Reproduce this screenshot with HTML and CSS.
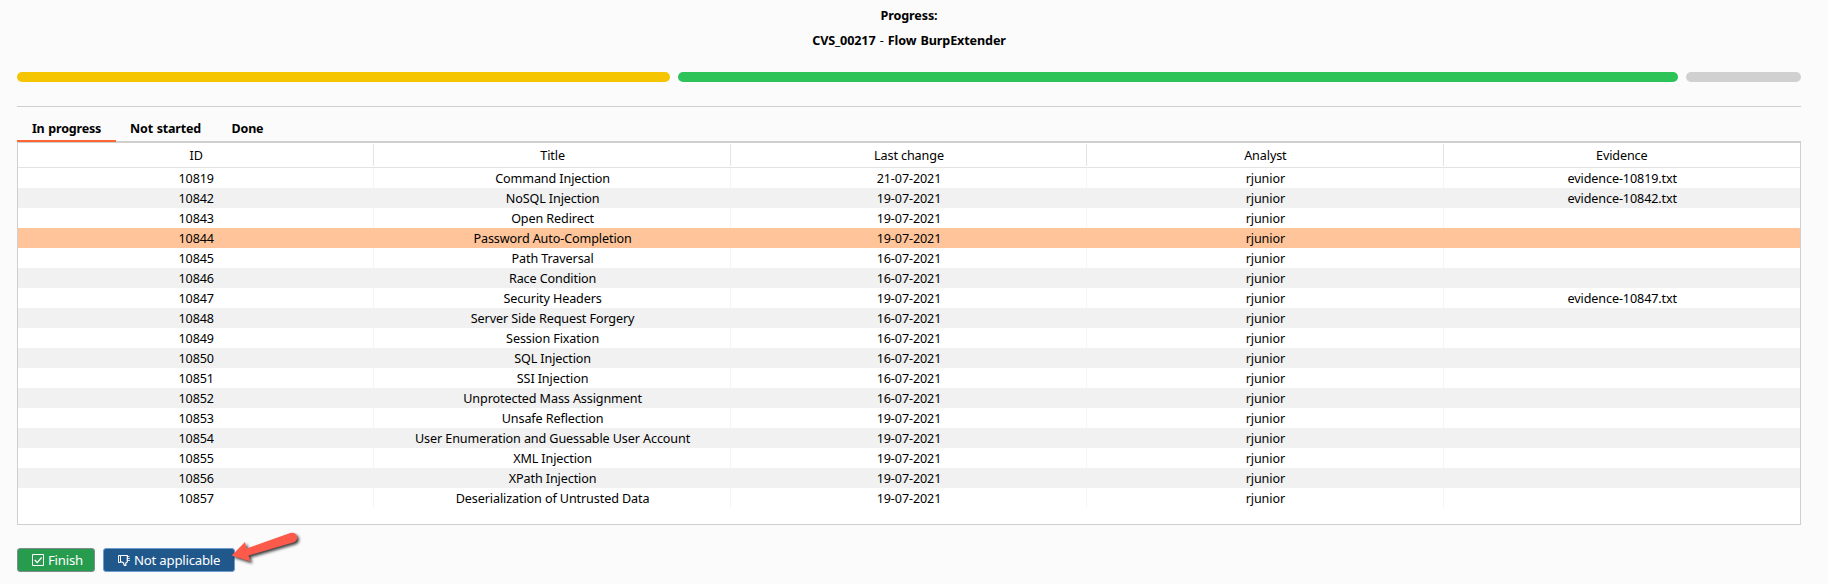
FILE: index.html
```
<!DOCTYPE html>
<html lang="en">
<head>
<meta charset="utf-8">
<title>Progress</title>
<link rel="stylesheet" href="styles.css">
</head>
<body>
<header class="heading"><div class="label">Progress:</div><div class="flow">CVS_00217 <span class="dash">-</span> Flow BurpExtender</div></header>
<div class="progress"><div class="bar doing"></div><div class="bar done"></div><div class="bar rest"></div></div>
<nav class="tabs"><span class="tab active">In progress</span><span class="tab">Not started</span><span class="tab last">Done</span></nav>
<main class="panel">
<table class="grid">
<thead><tr><th>ID</th><th>Title</th><th>Last change</th><th>Analyst</th><th>Evidence</th></tr></thead>
<tbody>
<tr><td>10819</td><td>Command Injection</td><td>21-07-2021</td><td>rjunior</td><td>evidence-10819.txt</td></tr>
<tr><td>10842</td><td>NoSQL Injection</td><td>19-07-2021</td><td>rjunior</td><td>evidence-10842.txt</td></tr>
<tr><td>10843</td><td>Open Redirect</td><td>19-07-2021</td><td>rjunior</td><td></td></tr>
<tr class="selected"><td>10844</td><td>Password Auto-Completion</td><td>19-07-2021</td><td>rjunior</td><td></td></tr>
<tr><td>10845</td><td>Path Traversal</td><td>16-07-2021</td><td>rjunior</td><td></td></tr>
<tr><td>10846</td><td>Race Condition</td><td>16-07-2021</td><td>rjunior</td><td></td></tr>
<tr><td>10847</td><td>Security Headers</td><td>19-07-2021</td><td>rjunior</td><td>evidence-10847.txt</td></tr>
<tr><td>10848</td><td>Server Side Request Forgery</td><td>16-07-2021</td><td>rjunior</td><td></td></tr>
<tr><td>10849</td><td>Session Fixation</td><td>16-07-2021</td><td>rjunior</td><td></td></tr>
<tr><td>10850</td><td>SQL Injection</td><td>16-07-2021</td><td>rjunior</td><td></td></tr>
<tr><td>10851</td><td>SSI Injection</td><td>16-07-2021</td><td>rjunior</td><td></td></tr>
<tr><td>10852</td><td>Unprotected Mass Assignment</td><td>16-07-2021</td><td>rjunior</td><td></td></tr>
<tr><td>10853</td><td>Unsafe Reflection</td><td>19-07-2021</td><td>rjunior</td><td></td></tr>
<tr><td>10854</td><td>User Enumeration and Guessable User Account</td><td>19-07-2021</td><td>rjunior</td><td></td></tr>
<tr><td>10855</td><td>XML Injection</td><td>19-07-2021</td><td>rjunior</td><td></td></tr>
<tr><td>10856</td><td>XPath Injection</td><td>19-07-2021</td><td>rjunior</td><td></td></tr>
<tr><td>10857</td><td>Deserialization of Untrusted Data</td><td>19-07-2021</td><td>rjunior</td><td></td></tr>
</tbody>
</table>
</main>
<footer class="actions">
<button class="btn finish"><svg width="13" height="13" viewBox="0 0 13 13" fill="none" stroke="#fff"><path d="M.5 .5h11v11H.5z"/><path d="M2.8 6l2.4 2.6L9.6 3.5" stroke-width="1.3"/></svg><span>Finish</span></button>
<button class="btn na"><svg width="13" height="13" viewBox="0 0 13 13" fill="none" stroke="#fff"><path d="M.5 1.5h2v7h-2z"/><path d="M2.5 1.5h6.8v6.5L7.8 9v2.5H6.4L5.3 8.8 2.5 7.5" stroke-width="1.2"/><path d="M9 2.5h2.5M9 4.5h3M9 6.5h3" stroke-opacity=".8"/></svg><span>Not applicable</span></button>
</footer>
<svg class="arrow" width="80" height="50" viewBox="225 525 80 50"><path d="M231.5 555.5L245 542l1.6 6.6 43.6-15.6a5 5 0 0 1 3.7 9.3L248.5 555.4l2 6.2z" fill="#fd5a4b"/></svg>
</body>
</html>
```
FILE: styles.css
```
* { box-sizing: border-box; }
body { margin: 0; height: 584px; padding: 0 27px 0 17px; background: #fbfbfb; color: #000; font: 12.6px/20px "Noto Sans", sans-serif; letter-spacing: -.11px; overflow: hidden; position: relative; }
.heading { height: 72px; padding: 6px 0 0; text-align: center; font-weight: 700; font-size: 12.6px; letter-spacing: -.12px; word-spacing: 1px; }
.label { height: 22px; line-height: 20px; }
.flow { line-height: 26px; }
.dash { font-weight: 400; }
.progress { display: grid; grid-template-columns: 653px 1000px 115px; gap: 8px; height: 35px; border-bottom: 1px solid #cfcfcf; }
.bar { height: 10px; border-radius: 5px; }
.doing { background: #f4c500; }
.done { background: #2dc358; }
.rest { background: #d0d0d0; }
.tabs { display: flex; height: 35px; margin-bottom: -1px; padding-top: 11px; font-weight: 700; font-size: 12.5px; letter-spacing: -.2px; word-spacing: .8px; position: relative; }
.tab { width: 99px; height: 24px; padding-top: 1px; text-align: center; white-space: nowrap; }
.tab.last { width: 65px; }
.active { border-bottom: 2px solid #ff6633; }
.panel { height: 384px; border: 1px solid #cfcfcf; border-top-width: 2px; background: #fff; }
.grid { width: 1782px; table-layout: fixed; border-collapse: separate; border-spacing: 0; text-align: center; }
.grid th { height: 25px; padding: 1px 0 0; font-weight: 400; border-bottom: 1px solid #e3e3e3; background: linear-gradient(#e3e3e3, #e3e3e3) right 1px / 1px 22px no-repeat; line-height: 22px; }
.grid th:last-child { background: none; }
.grid td { height: 20px; padding: 1px 0 0 1px; line-height: 19px; border-right: 1px solid #f5f5f5; white-space: nowrap; }
.grid td:last-child { border-right: 0; }
.grid tbody tr:nth-child(even) { background: #f1f1f1; }
.grid tbody tr:nth-child(even) td { border-color: transparent; }
.grid tbody tr.selected { background: #ffc499; }
.actions { display: flex; gap: 8px; padding-top: 23px; }
.btn { display: flex; align-items: center; gap: 3px; height: 24px; padding: 0 0 0 14px; border: 1px solid; border-radius: 3px; color: #fff; font: 13.2px/22px "Noto Sans", sans-serif; letter-spacing: -.22px; white-space: nowrap; }
.finish { width: 78px; background: #289c4e; border-color: #7f8c8d; }
.na { width: 132px; background: #20588c; border-color: #6b9bd1; }
.arrow { position: absolute; left: 225px; top: 525px; filter: drop-shadow(2px 2px 1.5px rgba(0,0,0,.75)); }
```
